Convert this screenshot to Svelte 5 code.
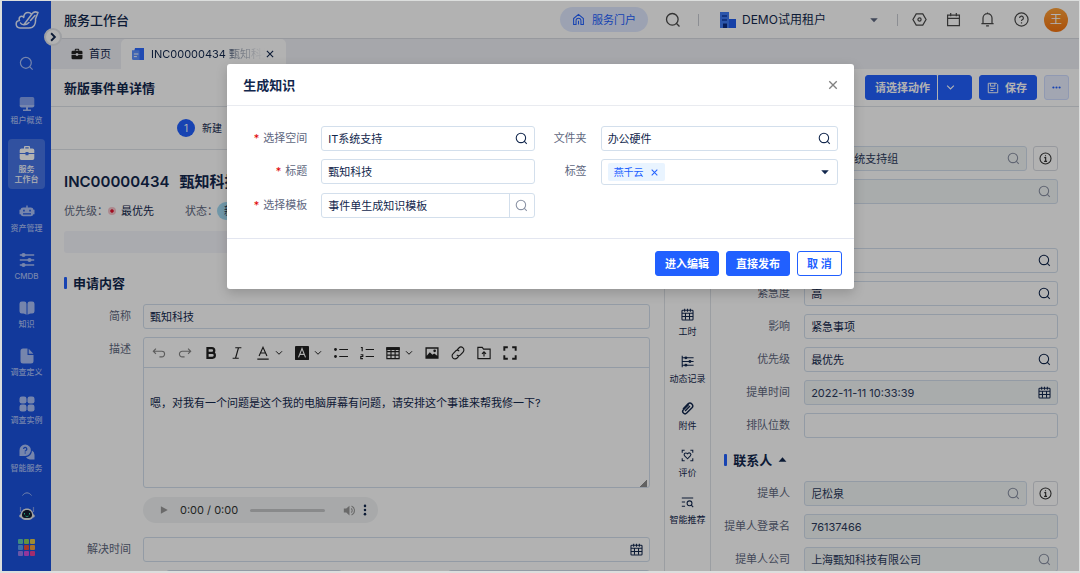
<script>
  const icons = {
    search: '<circle cx="7.300" cy="7.300" r="5.800"/><path d="M11.300 11.300l3.200 3.200"/>',
    close: '<path d="M3 3l10 10M13 3L3 13" stroke-width="1.800"/>',
    down: '<path d="M2 4.500l6 6 6-6" stroke-width="2"/>',
    caret: '<path d="M3 5.500h10L8 11z" fill="currentColor" stroke="none"/>',
    caretUp: '<path d="M1 12h14L8 4z" fill="currentColor" stroke="none"/>',
    right: '<path d="M5 2l6 6-6 6" stroke-width="3"/>',
    home: '<path d="M2 6.800L8 1.800l6 5v7.400h-3V9.500a3 3 0 0 0-6 0v4.700H2zM8 9.500v4.700"/>',
    hexagon: '<path d="M4.500 2h7L15 8l-3.500 6h-7L1 8z"/><circle cx="8" cy="8" r="1.700"/>',
    calendar: '<path d="M1.700 3.300h12.600v11.200H1.700zM1.700 6.700h12.600M5 1v3.500M11 1v3.500"/>',
    bell: '<path d="M1.500 12.300h13M3.200 12V6.500a4.800 4.800 0 0 1 9.600 0V12M6.500 14.700h3M8 .5v1.200"/>',
    help: '<circle cx="8" cy="8" r="7"/><path d="M6 6.400a2 2 0 1 1 2.800 1.900c-.6.3-.8.600-.8 1.300M8 11v1.200"/>',
    info: '<circle cx="8" cy="8" r="6.800"/><path d="M6.500 7h1.700v4.500M6.300 11.600h3.600M8 4v1.300" stroke-width="1.400"/>',
    date: '<rect x="1.200" y="2.800" width="13.600" height="12" rx="1"/><path d="M1.200 6.500h13.600M1.200 10.500h13.600M5.500 6.500v8M10.500 6.500v8M4.500 1v3.500M8 1v3.500M11.500 1v3.500"/>',
    save: '<path d="M2 1.700h10.500L14.300 3.500v10.800H1.700V1.700zM4.500 1.700v3.800h6V1.700M4.500 8.500h7M4.500 11.300h4"/>',
    more: '<g fill="currentColor" stroke="none"><circle cx="2.500" cy="8" r="1.900"/><circle cx="8" cy="8" r="1.900"/><circle cx="13.500" cy="8" r="1.900"/></g>',
    dots: '<g fill="currentColor" stroke="none"><circle cx="8" cy="2.500" r="1.700"/><circle cx="8" cy="8" r="1.700"/><circle cx="8" cy="13.500" r="1.700"/></g>',
    bag: '<path d="M5 3.500V2.200C5 1.500 5.500 1 6.200 1h3.600c.7 0 1.200.5 1.200 1.200v1.300h2.500A1.800 1.800 0 0 1 15.300 5.300V8H9.500V7h-3v1H.700V5.300a1.800 1.800 0 0 1 1.800-1.800zM6.300 3.500h3.400V2.200H6.300zM.7 9h5.800v1.200h3V9h5.800v4.200a1.800 1.800 0 0 1-1.800 1.800h-11a1.800 1.800 0 0 1-1.800-1.800z" fill="currentColor" stroke="none" fill-rule="evenodd"/>',
    doc: '<path d="M4 0h12v16H3V4z" fill="#2f6bff" stroke="none"/><path d="M0 3h10v13H2a2 2 0 0 1-2-2z" fill="#5c90ff" stroke="none"/><path d="M2.500 8h6M2.500 11.500h4" stroke="#fff"/>',
    building: '<path d="M0 0h9v16H0z" fill="#3f7cf5" stroke="none"/><path d="M9 7h7v9H9z" fill="#1f5cf0" stroke="none"/><path d="M2 4h5M2 8h5" stroke="#123da8"/><path d="M3 11.500h4V16H3z" fill="#0b2a80" stroke="none"/>',
    screen: '<path d="M2.500 1h11A1.800 1.800 0 0 1 15.300 2.800V9H.700V2.800A1.800 1.800 0 0 1 2.500 1z" fill="currentColor" stroke="none" opacity=".75"/><path d="M.7 9h14.600a2 2 0 0 1-2 2.500H9v2h3V15H4v-1.500h3v-2H2.700a2 2 0 0 1-2-2.500z" fill="currentColor" stroke="none"/>',
    robot: '<path d="M7.300 1.500h1.400v2h3.100a2.700 2.700 0 0 1 2.700 2.300h1v4.500h-1.100a2.700 2.700 0 0 1-2.600 2H4.200a2.700 2.700 0 0 1-2.600-2H.5V5.800h1a2.700 2.700 0 0 1 2.700-2.300h3.100zM4.200 5.800v1.700h1.500V5.800zM10.300 5.800v1.700h1.500V5.800zM4 9.300v1.100h8V9.300z" fill="currentColor" stroke="none" fill-rule="evenodd"/>',
    sliders: '<path d="M.8 3h14.400M.8 8h14.400M.8 13h14.400"/><g fill="currentColor" stroke="none"><circle cx="4.500" cy="3" r="2.100"/><circle cx="10.500" cy="8" r="2.100"/><circle cx="4.500" cy="13" r="2.100"/></g>',
    book: '<path d="M2.800 1.500h2.400a2.300 2.300 0 0 1 2.300 2.300v11c-1.300-.8-3-1.200-4.700-1.200A2.300 2.300 0 0 1 .5 11.300V3.800a2.300 2.300 0 0 1 2.300-2.300zM13.200 1.500h-2.400a2.300 2.300 0 0 0-2.300 2.300v11c1.300-.8 3-1.200 4.700-1.200a2.300 2.300 0 0 0 2.300-2.300V3.800a2.300 2.300 0 0 0-2.300-2.300z" fill="currentColor" stroke="none"/>',
    file: '<path d="M4 .5h4.500V7h6v6a2.500 2.500 0 0 1-2.500 2.500H4A2.500 2.500 0 0 1 1.500 13V3A2.500 2.500 0 0 1 4 .5zM9.700.8l4.700 5H9.700z" fill="currentColor" stroke="none"/>',
    blocks: '<g fill="currentColor" stroke="none"><rect x=".5" y=".5" width="7" height="7" rx="2.300"/><rect x="8.500" y=".5" width="7" height="7" rx="2.300"/><rect x=".5" y="8.500" width="7" height="7" rx="2.300"/><rect x="8.500" y="8.500" width="7" height="7" rx="2.300"/></g>',
    chat: '<path d="M6.200.5a5.700 5.700 0 1 1 0 11.400H.5V6.200A5.700 5.700 0 0 1 6.200.5z" fill="currentColor" stroke="none"/><path d="M13 6.500a5 5 0 0 1 2.500 4.300v4.700h-4.800A5 5 0 0 1 7 13.300a7 7 0 0 0 6-6.800z" fill="currentColor" stroke="none"/><path d="M4.600 5a1.600 1.600 0 1 1 2.300 1.500c-.5.200-.7.500-.7 1M6.200 8.600v1" stroke="#1c54de"/>',
    timeline: '<path d="M1.500 1v14M1.500 3.500h14M1.500 8h14M1.500 12.500h14"/><g fill="currentColor" stroke="none"><circle cx="6" cy="3.500" r="1.800"/><circle cx="11" cy="8" r="1.800"/><circle cx="6" cy="12.500" r="1.800"/></g>',
    clip: '<path d="M9.500 3.200L3 9.600a2.800 2.800 0 0 0 4 4l6.500-6.500a3.400 3.400 0 0 0-4.800-4.800L2.500 8.500M11 5l-6 6.200" stroke-width="1.800"/>',
    rate: '<path d="M1.500 4.500v-3h3M11.500 1.500h3v3M14.500 11.500v3h-3M4.500 14.500h-3v-3"/><path d="M8 12L4.500 8.500a2.100 2.100 0 0 1 3-3l.5.500.5-.5a2.100 2.100 0 0 1 3 3z"/>',
    recommend: '<path d="M1 2.500h14M1 7.500h4M1 12.500h4"/><circle cx="10.500" cy="9" r="3"/><path d="M12.700 11.200L15 13.800"/>',
    undo: '<path d="M4.500 3L1.500 6l3 3M1.500 6h9.700a3.200 3.200 0 0 1 0 6.400H8.500"/>',
    redo: '<path d="M11.500 3l3 3-3 3M14.500 6H4.800a3.200 3.200 0 0 0 0 6.400h2.700"/>',
    bold: '<path d="M4 2.500h5a2.700 2.700 0 0 1 0 5.400H4zM4 7.900h5.600a2.800 2.800 0 0 1 0 5.600H4z" stroke-width="2.600"/>',
    italic: '<path d="M6 2h7M3 14h7M9.700 2L6.300 14"/>',
    color: '<path d="M3.500 11.500L8 1.500l4.500 10M5 8h6M1.500 15h13"/>',
    fill: '<rect width="16" height="16" rx="1" fill="currentColor" stroke="none"/><path d="M4 13L8 3l4 10M5.500 9.500h5" stroke="#fff"/>',
    bullets: '<path d="M6 4h10M6 12h10"/><g fill="currentColor" stroke="none"><circle cx="1.700" cy="4" r="1.600"/><circle cx="1.700" cy="12" r="1.600"/></g>',
    numbers: '<path d="M6.500 4H16M6.500 12H16M1 1.700h1.500V6M.7 10h2.500v2H.9v2.500h2.500"/>',
    table: '<path d="M1 2h14v12.500H1zM1 6.500h14M1 10.500h14M5.700 4v10.500M10.400 4v10.500"/><path d="M1 2h14v2H1z" fill="currentColor"/>',
    image: '<path d="M.5 1.500h15v13H.5zM2 3v8l3.500-4 3 3 2-1.500L14 11V3z" fill="currentColor" stroke="none" fill-rule="evenodd"/><circle cx="11" cy="5.500" r="1.500" fill="currentColor" stroke="none"/>',
    link: '<path d="M7 4.500l2-2.200a3.300 3.300 0 0 1 4.800 4.600l-2.700 3a3.200 3.200 0 0 1-4.500.3M9 11.500l-2 2.200a3.300 3.300 0 0 1-4.800-4.600l2.700-3a3.200 3.200 0 0 1 4.500-.3"/>',
    upload: '<path d="M1 14.500v-13h5l1.500 2H15v11zM8 12V7M5.700 9L8 6.700 10.300 9"/>',
    full: '<path d="M1.500 5.500v-4h4M10.500 1.500h4v4M14.500 10.500v4h-4M5.500 14.500h-4v-4" stroke-width="2.200"/>',
    play: '<path d="M3 2l11 6-11 6z" fill="currentColor" stroke="none"/>',
    volume: '<path d="M1 5.500h3L8 2v12l-4-3.500H1z" fill="currentColor" stroke="none"/><path d="M10 5.500a3 3 0 0 1 0 5M10.500 2.500a6 6 0 0 1 0 11"/>'
  }

  const menu = [
    { icon: 'screen', lines: ['租户概览'] },
    { icon: 'bag', lines: ['服务', '工作台'], active: true },
    { icon: 'robot', lines: ['资产管理'] },
    { icon: 'sliders', lines: ['CMDB'] },
    { icon: 'book', lines: ['知识'] },
    { icon: 'file', lines: ['调查定义'] },
    { icon: 'blocks', lines: ['调查实例'] },
    { icon: 'chat', lines: ['智能服务'] }
  ]

  const apps = ['#5ec9b4', '#8fd05a', '#e6c84a', '#5aa0f0', '#f0503c', '#f5a03c', '#9a7cf0', '#d24ce0', '#e8409c']

  const tools = [
    { icon: 'date', text: '工时' },
    { icon: 'timeline', text: '动态记录' },
    { icon: 'clip', text: '附件' },
    { icon: 'rate', text: '评价' },
    { icon: 'recommend', text: '智能推荐' }
  ]

  const editorTools = [
    { icon: 'undo', muted: true },
    { icon: 'redo', muted: true },
    { icon: 'bold' },
    { icon: 'italic' },
    { icon: 'color', menu: true },
    { icon: 'fill', menu: true },
    { icon: 'bullets' },
    { icon: 'numbers' },
    { icon: 'table', menu: true },
    { icon: 'image' },
    { icon: 'link' },
    { icon: 'upload' },
    { icon: 'full' }
  ]

  const groups = [
    {
      rows: [
        { id: 'team', value: 'IT运维系统支持组', icon: 'search', disabled: true, info: true },
        { id: 'owner', value: '', icon: 'search', disabled: true }
      ]
    },
    {
      rows: [
        { id: 'category', value: '', icon: 'search' },
        { id: 'urgency', label: '紧急度', value: '高', icon: 'search' },
        { id: 'impact', label: '影响', value: '紧急事项' },
        { id: 'priority', label: '优先级', value: '最优先', icon: 'search' },
        { id: 'created', label: '提单时间', value: '2022-11-11 10:33:39', icon: 'date', disabled: true },
        { id: 'queue', label: '排队位数', value: '' }
      ]
    },
    {
      title: '联系人',
      rows: [
        { id: 'contact', label: '提单人', value: '尼松泉', icon: 'search', disabled: true, info: true },
        { id: 'login', label: '提单人登录名', value: '76137466', disabled: true },
        { id: 'company', label: '提单人公司', value: '上海甄知科技有限公司', icon: 'search', disabled: true }
      ]
    }
  ]

  let description = $state('\n嗯，对我有一个问题是这个我的电脑屏幕有问题，请安排这个事谁来帮我修一下?')
</script>

{#snippet icon(name, size = 14)}
  <svg class="icon" width={size} height={size} viewBox="0 0 16 16" fill="none" stroke="currentColor" stroke-width="1.3" aria-hidden="true">{@html icons[name]}</svg>
{/snippet}

<div class="app">
  <nav class="sidebar">
    <svg class="logo" width="24" height="20" viewBox="0 0 24 20" fill="none" stroke="currentColor" stroke-width="1.500" stroke-linecap="round" stroke-linejoin="round">
      <path d="M9 7C5 5 3.500 8 4.500 10.500 0 11 0 17.500 5 18h9c5 0 7-4 6.500-9L23 2.500c-2.500-1-5-.5-6 1.500L9 14.500M8.500 7.500C9 4 11 2.500 13 2.500c1.500 0 2.500.5 3.300 1.500M5.500 13c1 2 5 3 8.500-.5M20 5.500l-4.500 5"/>
    </svg>
    <a class="find" href="#search" aria-label="搜索">{@render icon('search', 15)}</a>
    <ul class="menu">
      {#each menu as item}
        <li class:active={item.active}>
          <a href="#menu">
            {@render icon(item.icon, 16)}
            {#each item.lines as line}
              <span>{line}</span>
            {/each}
          </a>
        </li>
      {/each}
    </ul>
    <svg class="arc" width="10" height="4" viewBox="0 0 10 4" fill="none" stroke="currentColor"><path d="M.5 3.500c2.500-3.500 6.500-3.500 9 0"/></svg>
    <svg class="bot" width="16" height="16" viewBox="0 0 16 16">
      <path d="M1.500 2v5M14.500 2v5" stroke="#7c98e8" stroke-width="1.200"/>
      <path d="M8 3.500c4 0 6 3 6.500 6 .7 0 1.200.5 1.200 1.500s-.7 1.500-1.700 1.500C13 14.500 11 15 8 15s-5-.5-6-2.500c-1 0-1.700-.5-1.700-1.500s.5-1.500 1.200-1.500c.5-3 2.500-6 6.500-6z" fill="#e4e6ea"/>
      <path d="M8 5c3.500 0 5 2.500 5 5s-1.500 3-5 3-5-.5-5-3 1.500-5 5-5z" fill="#151c2e"/>
      <path d="M5.500 8v1.500M10.500 8v1.500M6.500 11c1 .7 2 .7 3 0" stroke="#2fe0b0" fill="none"/>
    </svg>
    <div class="apps">
      {#each apps as color}
        <i style="background: {color}"></i>
      {/each}
    </div>
    <button class="toggle" aria-label="展开">{@render icon('right', 10)}</button>
  </nav>

  <div class="page">
    <header class="topbar">
      <h1>服务工作台</h1>
      <a class="portal" href="#portal">{@render icon('home', 13)}服务门户</a>
      <button class="plain" aria-label="搜索">{@render icon('search', 16)}</button>
      <i class="divider"></i>
      <label class="tenant">
        {@render icon('building', 16)}
        <select aria-label="租户"><option>DEMO试用租户</option></select>
        {@render icon('caret', 12)}
      </label>
      <i class="divider"></i>
      <div class="actions">
        <button class="plain" aria-label="设置">{@render icon('hexagon', 15)}</button>
        <button class="plain" aria-label="日历">{@render icon('calendar', 15)}</button>
        <button class="plain" aria-label="通知">{@render icon('bell', 15)}</button>
        <button class="plain" aria-label="帮助">{@render icon('help', 15)}</button>
      </div>
      <span class="avatar">王</span>
    </header>

    <div class="tabs">
      <a class="tab" href="#home">{@render icon('bag', 12)}首页</a>
      <div class="tab current">
        {@render icon('doc', 12)}
        <a class="tab-text" href="#detail">INC00000434 甄知科技</a>
        <button class="plain" aria-label="关闭">{@render icon('close', 10)}</button>
      </div>
    </div>

    <div class="titlebar">
      <h2>新版事件单详情</h2>
      <div class="split">
        <button class="primary">请选择动作</button>
        <button class="primary arrow" aria-label="更多动作">{@render icon('down', 9)}</button>
      </div>
      <button class="primary save">{@render icon('save', 12)}保存</button>
      <button class="more" aria-label="更多">{@render icon('more', 9)}</button>
    </div>

    <div class="columns">
      <main class="detail">
        <div class="steps"><span class="step">1</span>新建</div>
        <div class="content">
          <h2 class="ticket">INC00000434<span>甄知科技</span></h2>
          <div class="meta">
            <span>优先级：</span><i class="dot"></i><b>最优先</b>
            <span>状态：</span><em>新建</em>
          </div>
          <div class="strip"></div>
          <h3 class="section">申请内容</h3>
          <div class="form">
            <label for="short">简称</label>
            <div class="box"><input id="short" value="甄知科技" /></div>
            <label for="desc">描述</label>
            <div>
              <div class="editor">
                <div class="toolbar">
                  {#each editorTools as tool}
                    <button class="plain" class:muted={tool.muted} aria-label={tool.icon}>
                      {@render icon(tool.icon, 14)}
                      {#if tool.menu}{@render icon('down', 8)}{/if}
                    </button>
                  {/each}
                </div>
                <textarea id="desc" bind:value={description}></textarea>
                <i class="grip"></i>
              </div>
              <div class="player">
                <button class="plain" aria-label="播放">{@render icon('play', 10)}</button>
                <span>0:00 / 0:00</span>
                <input type="range" min="0" max="100" value="0" aria-label="进度" />
                <button class="plain" aria-label="音量">{@render icon('volume', 13)}</button>
                <button class="plain dark" aria-label="选项">{@render icon('dots', 12)}</button>
              </div>
            </div>
            <label for="solved">解决时间</label>
            <div class="box"><input id="solved" />{@render icon('date', 13)}</div>
            <div class="pair">
              <div class="box disabled"><input aria-label="开始" disabled /></div>
              <div class="box disabled"><input aria-label="结束" disabled /></div>
            </div>
          </div>
        </div>
      </main>

      <aside class="tools">
        {#each tools as tool}
          <a href="#tool">{@render icon(tool.icon, 13)}<span>{tool.text}</span></a>
        {/each}
      </aside>

      <aside class="info">
        {#each groups as group}
          {#if group.title}
            <h3 class="section">{group.title}{@render icon('caretUp', 9)}</h3>
          {/if}
          <div class="group">
            {#each group.rows as row}
              <div class="row">
                <label for={row.id}>{row.label}</label>
                <div class="box" class:disabled={row.disabled}>
                  <input id={row.id} value={row.value} disabled={row.disabled} />
                  {#if row.icon}{@render icon(row.icon, 13)}{/if}
                </div>
                {#if row.info}
                  <button class="info-button" aria-label="详情">{@render icon('info', 13)}</button>
                {/if}
              </div>
            {/each}
          </div>
        {/each}
      </aside>
    </div>
  </div>

  <div class="mask">
    <div class="modal" role="dialog" aria-modal="true" aria-labelledby="modal-title">
      <div class="modal-head">
        <h2 id="modal-title">生成知识</h2>
        <button class="plain" aria-label="关闭">{@render icon('close', 12)}</button>
      </div>
      <form class="modal-body">
        <label class="required" for="space">选择空间</label>
        <div class="box"><input id="space" value="IT系统支持" />{@render icon('search', 13)}</div>
        <label for="folder">文件夹</label>
        <div class="box"><input id="folder" value="办公硬件" />{@render icon('search', 13)}</div>

        <label class="required" for="title">标题</label>
        <div class="box"><input id="title" value="甄知科技" /></div>
        <label for="tags">标签</label>
        <div class="box tags">
          <span class="tag">燕千云<button type="button" class="plain" aria-label="移除">{@render icon('close', 9)}</button></span>
          <input id="tags" />
          {@render icon('caret', 12)}
        </div>

        <label class="required" for="template">选择模板</label>
        <div class="box addon">
          <input id="template" value="事件单生成知识模板" />
          <button type="button" class="plain" aria-label="选择">{@render icon('search', 13)}</button>
        </div>
      </form>
      <div class="modal-foot">
        <button class="primary">进入编辑</button>
        <button class="primary">直接发布</button>
        <button class="ghost">取 消</button>
      </div>
    </div>
  </div>
</div>

<style>
  :global(body) {
    margin: 0;
    overflow: hidden;
  }

  .app, .app * {
    box-sizing: border-box;
  }

  .app {
    position: relative;
    display: flex;
    height: 100vh;
    overflow: hidden;
    border: solid #dcdedd;
    border-width: 1px 1px 2px 2px;
    background: #fff;
    color: #12274d;
    font-family: Inter, "Noto Sans CJK SC", sans-serif;
    font-size: 11px;
    line-height: 16px;
  }

  h1, h2, h3, ul {
    margin: 0;
    padding: 0;
    font-size: 13px;
    font-weight: 600;
    line-height: 20px;
  }

  h1 {
    font-weight: 500;
  }

  a {
    color: inherit;
    text-decoration: none;
  }

  button, input, select, textarea {
    font: inherit;
    color: inherit;
  }

  button {
    display: flex;
    align-items: center;
    justify-content: center;
    padding: 0;
  }

  .icon {
    flex: none;
    display: block;
  }

  .plain {
    border: 0;
    background: none;
  }

  /* sidebar */
  .sidebar {
    position: relative;
    z-index: 1;
    flex: none;
    display: flex;
    flex-direction: column;
    align-items: center;
    width: 49px;
    padding-top: 9px;
    background: #1a52de;
    color: #a9bff7;
  }

  .logo {
    color: #e6ecff;
  }

  .find {
    margin: 26px 0 17px;
  }

  .menu {
    display: flex;
    flex-direction: column;
    gap: 7px;
    list-style: none;
    font-size: 8px;
    font-weight: 500;
    line-height: 10px;

    a {
      display: flex;
      flex-direction: column;
      align-items: center;
      width: 37px;
      height: 41px;
      padding-top: 8px;
    }

    .icon {
      margin-bottom: 3px;
    }

    .active {
      margin-top: 3px;
    }

    .active a {
      height: 50px;
      padding-top: 6px;
      border-radius: 4px;
      background: #4775e6;
      color: #fff;
    }
  }

  .arc {
    margin-top: 15px;
  }

  .bot {
    margin: 9px 0 18px;
  }

  .apps {
    display: grid;
    grid-template-columns: repeat(3, 5px);
    gap: 1px;

    i {
      height: 5px;
      border-radius: 1px;
    }
  }

  .toggle {
    position: absolute;
    top: 27px;
    right: -11px;
    width: 18px;
    height: 18px;
    border: 2px solid #e3e5ea;
    border-radius: 50%;
    background: #fff;
    color: #12274d;
  }

  /* top */
  .page {
    flex: 1;
    min-width: 0;
    display: flex;
    flex-direction: column;
  }

  .topbar {
    flex: none;
    display: flex;
    align-items: center;
    height: 38px;
    padding: 0 11px 0 13px;
    border-bottom: 1px solid #d9dce3;

    h1 {
      flex: 1;
    }

    .plain {
      color: #4a4a4a;
    }
  }

  .portal {
    display: flex;
    align-items: center;
    gap: 7px;
    height: 25px;
    margin-right: 17px;
    padding: 0 12px;
    border-radius: 13px;
    background: #e0e9ff;
    color: #2160ff;
  }

  .divider {
    width: 1px;
    height: 12px;
    margin: 0 14px 0 17px;
    background: #c9ccd3;
  }

  .tenant {
    display: flex;
    align-items: center;
    gap: 6px;
    margin-left: 7px;
    font-size: 12px;

    .icon:last-child {
      color: #5e6780;
    }

    select {
      width: 120px;
      padding: 0;
      border: 0;
      background: none;
      appearance: none;
    }
  }

  .actions {
    display: flex;
    gap: 19px;
    margin-right: 15px;
  }

  .avatar {
    width: 24px;
    height: 24px;
    border-radius: 50%;
    background: linear-gradient(#ffa23a, #f57410);
    color: #fff;
    font-size: 12px;
    line-height: 24px;
    text-align: center;
  }

  .tabs {
    flex: none;
    display: flex;
    height: 30px;
    padding-left: 8px;
    background: #eeeff5;
  }

  .tab {
    display: flex;
    align-items: center;
    gap: 6px;
    padding: 0 10px 0 12px;

    > .icon:first-child {
      color: #222;
    }
  }

  .current {
    gap: 0;
    width: 165px;
    padding: 0 11px;
    border-radius: 5px 5px 0 0;
    background: #fff;
  }

  .tab-text {
    flex: 1;
    margin-left: 7px;
    overflow: hidden;
    white-space: nowrap;
    mask-image: linear-gradient(90deg, #000 65%, rgba(0, 0, 0, 0.45) 75%, transparent);
  }

  .titlebar {
    flex: none;
    display: flex;
    align-items: center;
    gap: 7px;
    height: 38px;
    padding: 0 10px 0 13px;
    border-bottom: 1px solid #dfe2e8;

    h2 {
      flex: 1;
    }
  }

  .primary, .ghost, .more {
    height: 25px;
    padding: 0 10px;
    border: 1px solid #2160ff;
    border-radius: 3px;
    background: #2160ff;
    color: #fff;
    font-weight: 600;
  }

  .ghost {
    background: #fff;
    color: #2160ff;
  }

  .more {
    width: 25px;
    padding: 0;
    border-color: #cfdcff;
    background: #e8eeff;
    color: #2160ff;
  }

  .split {
    display: flex;
    gap: 1px;

    .primary {
      padding: 0 6px 0 9px;
      border-radius: 3px 0 0 3px;
    }

    .arrow {
      width: 34px;
      padding: 0 10px 0 0;
      border-radius: 0 3px 3px 0;
    }
  }

  .save {
    gap: 6px;
    padding: 0 9px 0 7px;
  }

  /* columns */
  .columns {
    flex: 1;
    min-height: 0;
    display: grid;
    grid-template-columns: 5fr 47px 3fr;
  }

  .detail, .tools, .info {
    min-width: 0;
    overflow: hidden;
  }

  .steps {
    display: flex;
    align-items: center;
    gap: 7px;
    height: 43px;
    padding-left: 126px;
    border-bottom: 1px solid #dfe2e8;
    font-size: 10px;
  }

  .step {
    width: 18px;
    height: 18px;
    border-radius: 50%;
    background: #2160ff;
    color: #fff;
    line-height: 18px;
    text-align: center;
  }

  .content {
    padding: 19px 14px 0 13px;
  }

  .ticket {
    font-size: 15px;
    line-height: 26px;
    white-space: nowrap;

    span {
      margin-left: 10px;
    }
  }

  .meta {
    display: flex;
    align-items: center;
    height: 32px;
    color: #5e6780;

    b {
      margin: 0 31px 0 5px;
      color: #12274d;
      font-weight: 400;
    }

    em {
      margin-left: -1px;
      padding: 1px 7px;
      border-radius: 10px;
      background: #a3dcf5;
      color: #12274d;
      font-style: normal;
    }
  }

  .dot {
    width: 8px;
    height: 8px;
    border: 2px solid #f7c4cb;
    border-radius: 50%;
    background: #e8112d;
    background-clip: padding-box;
  }

  .strip {
    height: 22px;
    margin: 4px 0 20px;
    border-radius: 3px;
    background: #f4f5fb;
  }

  .section {
    display: flex;
    align-items: center;
    gap: 6px;

    &::before {
      content: '';
      width: 3px;
      height: 12px;
      border-radius: 1px;
      background: #2160ff;
    }
  }

  .form {
    display: grid;
    grid-template-columns: 67px minmax(0, 1fr);
    gap: 8px 12px;
    margin-top: 11px;
  }

  label {
    color: #5e6780;
    line-height: 25px;
    text-align: right;
    white-space: nowrap;
  }

  .tenant {
    color: #12274d;
    line-height: 16px;
  }

  .box {
    display: flex;
    align-items: center;
    min-width: 0;
    height: 25px;
    padding: 0 6px;
    border: 1px solid #d3dfec;
    border-radius: 3px;
    background: #fff;

    input {
      flex: 1;
      min-width: 0;
      padding: 0;
      border: 0;
      outline: 0;
      background: none;
    }
  }

  .disabled {
    background: #f3f6f7;

    .icon {
      color: #8b93a5;
    }

    input {
      color: #2b3a5c;
    }

    [id='created'] + .icon {
      color: #12274d;
    }
  }

  .editor {
    position: relative;
    border: 1px solid #d3dfec;
    border-radius: 3px;

    textarea {
      display: block;
      width: 100%;
      height: 119px;
      padding: 5px 6px;
      border: 0;
      outline: 0;
      background: none;
      line-height: 20px;
      resize: none;
    }
  }

  .toolbar {
    display: flex;
    gap: 12px;
    height: 30px;
    padding: 0 8px;
    border-bottom: 1px solid #d3dfec;

    .plain {
      gap: 5px;
      color: #222;
    }

    .muted {
      color: #858585;
    }
  }

  .grip {
    position: absolute;
    right: 2px;
    bottom: 0;
    width: 7px;
    height: 7px;
    background: linear-gradient(135deg, transparent 50%, #8d8d8d 50%);
  }

  .player {
    display: flex;
    align-items: center;
    width: 235px;
    height: 26px;
    margin: 9px 0 6px;
    padding: 0 7px 0 16px;
    border-radius: 13px;
    background: #f1f3f4;
    color: #333;

    span {
      margin: 0 12px 0 11px;
      white-space: nowrap;
    }

    .plain {
      color: #999;
    }

    .dark {
      color: #12274d;
      margin-left: 3px;
    }

    input {
      flex: 1;
      min-width: 0;
      height: 3px;
      margin: 0 18px 0 0;
      border-radius: 2px;
      background: #c4c6c8;
      appearance: none;

      &::-webkit-slider-thumb {
        appearance: none;
        width: 0;
      }
    }
  }

  .pair {
    grid-column: 2;
    display: grid;
    grid-template-columns: 7fr 8fr;
    gap: 106px;
    padding-left: 23px;
  }

  .tools {
    display: flex;
    flex-direction: column;
    gap: 17px;
    padding-top: 201px;
    border: solid #dfe2e8;
    border-width: 0 1px;
    font-size: 9px;
    line-height: 12px;

    a {
      display: flex;
      flex-direction: column;
      align-items: center;
      gap: 5px;
      white-space: nowrap;
    }
  }

  .info {
    padding: 39px 21px 0 13px;

    .section {
      height: 43px;
    }
  }

  .group {
    display: flex;
    flex-direction: column;
    gap: 8px;

    & + .group {
      margin-top: 44px;
    }
  }

  .row {
    display: flex;

    label {
      width: 66px;
      margin-right: 14px;
    }

    .box {
      flex: 1;
    }
  }

  .info-button {
    width: 25px;
    height: 25px;
    margin-left: 6px;
    border: 1px solid #d9dce3;
    border-radius: 3px;
    background: #fff;
    color: #333;
  }

  /* dialog */
  .mask {
    position: absolute;
    inset: 0;
    z-index: 2;
    display: flex;
    align-items: flex-start;
    justify-content: center;
    padding-top: 63px;
    background: rgba(0, 0, 0, 0.3);
  }

  .modal {
    width: 58vw;
    border-radius: 3px;
    background: #fff;
    box-shadow: 0 4px 12px rgba(0, 0, 0, 0.18);
  }

  .modal-head {
    display: flex;
    align-items: center;
    justify-content: space-between;
    height: 42px;
    padding: 0 15px 0 16px;
    border-bottom: 1px solid #e9ebf0;

    .plain {
      color: #808080;
    }
  }

  .modal-body {
    display: grid;
    grid-template-columns: 80px 9fr 38px 10fr;
    align-items: start;
    gap: 8px 14px;
    padding: 20px 16px 20px 0;
  }

  .required::before {
    content: '*';
    margin-right: 4px;
    color: #e00000;
  }

  .tags {
    height: 26px;
  }

  .tag {
    display: flex;
    align-items: center;
    gap: 6px;
    height: 18px;
    padding: 0 6px;
    border-radius: 2px;
    background: #e9f4ff;
    color: #2160ff;
    font-size: 10px;

    .plain {
      color: #2160ff;
    }
  }

  .addon {
    padding-right: 0;

    .plain {
      width: 25px;
      height: 23px;
      border-left: 1px solid #d3dfec;
      color: #8b93a5;
    }
  }

  .modal-foot {
    display: flex;
    justify-content: flex-end;
    gap: 7px;
    padding: 12px 12px 13px;
    border-top: 1px solid #e3e6f0;

    .primary, .ghost {
      padding: 0 9px;
    }
  }
</style>
